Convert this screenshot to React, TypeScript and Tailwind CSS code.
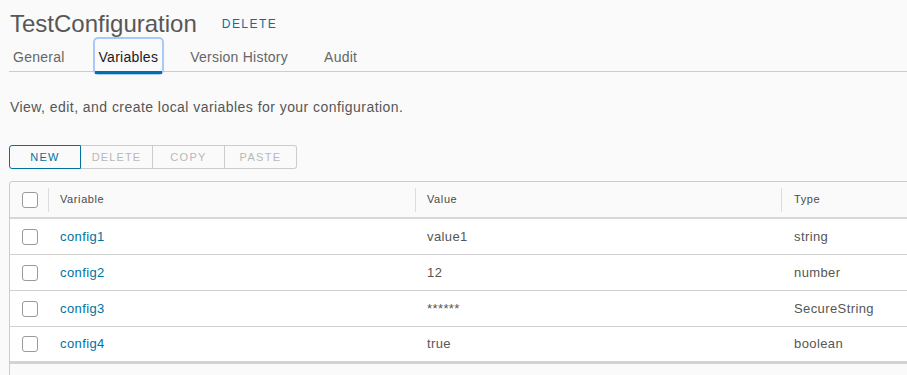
import React from "react";

const tabs = ["General", "Variables", "Version History", "Audit"];

const rows = [
  { name: "config1", value: "value1", type: "string" },
  { name: "config2", value: "12", type: "number" },
  { name: "config3", value: "******", type: "SecureString" },
  { name: "config4", value: "true", type: "boolean" },
];

function Checkbox() {
  return <div className="w-4 h-4 rounded-[3px] border border-[#9a9a9a] bg-white" />;
}

export default function App() {
  return (
    <div
      className="w-[907px] h-[375px] overflow-hidden bg-[#fafafa] pl-[9px] text-[#565656]"
      style={{ fontFamily: '"Liberation Sans", Arial, sans-serif' }}
    >
      {/* header */}
      <div className="flex items-center gap-[25px] pt-[9px] pl-px h-[38px]">
        <h1 className="text-[24px] leading-[28px] text-[#575757] h-[28px]">TestConfiguration</h1>
        <button className="text-[12px] tracking-[0.12em] text-[#0072a3] mt-px">DELETE</button>
      </div>

      {/* tabs */}
      <div className="flex gap-6 border-b border-[#cccccc] h-[34px]">
        {tabs.map((t) => {
          const active = t === "Variables";
          return (
            <div
              key={t}
              className={
                active
                  ? "relative ml-[2px] px-1 pt-[10px] text-[14px] leading-[16px] tracking-[0.25px] text-[#1b1b1b] rounded-[3px] outline-2 outline-[#a9c9fb] h-[34px] mt-px"
                  : t === "Audit"
                  ? "ml-[4px] px-1 pt-[11px] text-[14px] leading-[16px] tracking-[0.25px] text-[#666666] h-[34px]"
                  : "px-1 pt-[11px] text-[14px] leading-[16px] tracking-[0.25px] text-[#666666] h-[34px]"
              }
            >
              {t}
              {active && <div className="absolute left-0 right-0 bottom-[-1px] h-[3px] bg-[#0072a3]" />}
            </div>
          );
        })}
      </div>

      <p className="mt-[25px] pl-px text-[14px] leading-[20px] tracking-[0.45px] text-[#565656]">
        View, edit, and create local variables for your configuration.
      </p>

      {/* action buttons */}
      <div className="mt-[28px] flex w-[288px] h-[24px]">
        <button className="w-[72px] h-[24px] rounded-l-[3px] border border-[#0072a3] text-[11px] tracking-[0.12em] text-[#0072a3]">
          NEW
        </button>
        <button className="w-[72px] h-[24px] border-y border-r border-[#cccccc] text-[11px] tracking-[0.1em] text-[#b8b8b8]">
          DELETE
        </button>
        <button className="w-[72px] h-[24px] border-y border-r border-[#cccccc] text-[11px] tracking-[0.12em] text-[#b8b8b8]">
          COPY
        </button>
        <button className="w-[72px] h-[24px] rounded-r-[3px] border-y border-r border-[#cccccc] text-[11px] tracking-[0.12em] text-[#b8b8b8]">
          PASTE
        </button>
      </div>

      {/* datagrid */}
      <div className="mt-[12px] w-[940px] rounded-[3px] border border-[#cccccc] bg-[#fafafa]">
        <div className="grid grid-cols-[38px_367px_366px_1fr] h-[37px] border-b-2 border-[#d7d7d7] items-center text-[11px] tracking-[0.6px] text-[#4a4a4a]">
          <div className="pl-3">
            <Checkbox />
          </div>
          <div className="border-l border-[#dddddd] h-[24px] flex items-center pl-[11px]">Variable</div>
          <div className="border-l border-[#dddddd] h-[24px] flex items-center pl-[11px]">Value</div>
          <div className="border-l border-[#dddddd] h-[24px] flex items-center pl-3">Type</div>
        </div>
        {rows.map((r, i) => (
          <div
            key={r.name}
            className={
              "grid grid-cols-[38px_367px_366px_1fr] items-center bg-white text-[13px] tracking-[0.4px] " +
              (i === rows.length - 1 ? "h-[37px] border-b-[3px] border-[#d3d3d3]" : "h-[36px] border-b border-[#d0d0d0]")
            }
          >
            <div className="pl-3">
              <Checkbox />
            </div>
            <div className="pl-3 text-[#0072a3]">{r.name}</div>
            <div className="pl-3 text-[#565656]">{r.value}</div>
            <div className="pl-[13px] text-[#565656]">{r.type}</div>
          </div>
        ))}
        <div className="h-[40px]" />
      </div>
    </div>
  );
}
